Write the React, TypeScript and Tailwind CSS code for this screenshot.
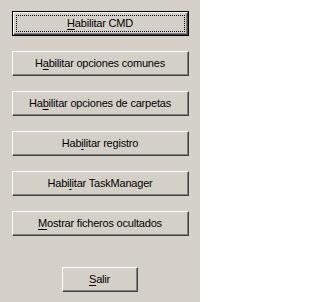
import clsx from 'clsx'

type Item = { label: string; mnemonic: number }

const options: Item[] = [
  { label: 'Habilitar CMD', mnemonic: 0 },
  { label: 'Habilitar opciones comunes', mnemonic: 1 },
  { label: 'Habilitar opciones de carpetas', mnemonic: 2 },
  { label: 'Habilitar registro', mnemonic: 3 },
  { label: 'Habilitar TaskManager', mnemonic: 4 },
  { label: 'Mostrar ficheros ocultados', mnemonic: 0 },
]

const Label = ({ label, mnemonic }: Item) => (
  <span className="whitespace-pre">
    {label.slice(0, mnemonic)}
    <span className="underline decoration-1 underline-offset-2">{label[mnemonic]}</span>
    {label.slice(mnemonic + 1)}
  </span>
)

const ClassicButton = ({
  item,
  isDefault = false,
  className,
}: {
  item: Item
  isDefault?: boolean
  className?: string
}) => (
  <button
    type="button"
    className={clsx(
      'flex h-[25px] bg-[#d4d0c8] p-0 text-[11px] leading-none tracking-[-0.2px] text-black',
      isDefault && 'border border-black',
      className
    )}
  >
    <span className="flex flex-1 border border-t-white border-r-[#404040] border-b-[#404040] border-l-white">
      <span className="relative flex flex-1 items-center justify-center border-r border-b border-[#808080] pt-px">
        {isDefault && (
          <span className="absolute top-[2px] right-[1px] bottom-[1px] left-[2px] border border-dotted border-black" />
        )}
        <Label {...item} />
      </span>
    </span>
  </button>
)

export default function App() {
  return (
    <div className="flex h-[302px] w-[200px] flex-col bg-[#d4d0c8] pt-[11px] pl-[12px] font-['Liberation_Sans',Arial,sans-serif]">
      <div className="flex flex-col gap-[15px]">
        {options.map((item, i) => (
          <ClassicButton key={item.label} item={item} isDefault={i === 0} className="w-[177px]" />
        ))}
      </div>
      <ClassicButton
        item={{ label: 'Salir', mnemonic: 0 }}
        className="mt-[31px] ml-[50px] w-[76px]"
      />
    </div>
  )
}
